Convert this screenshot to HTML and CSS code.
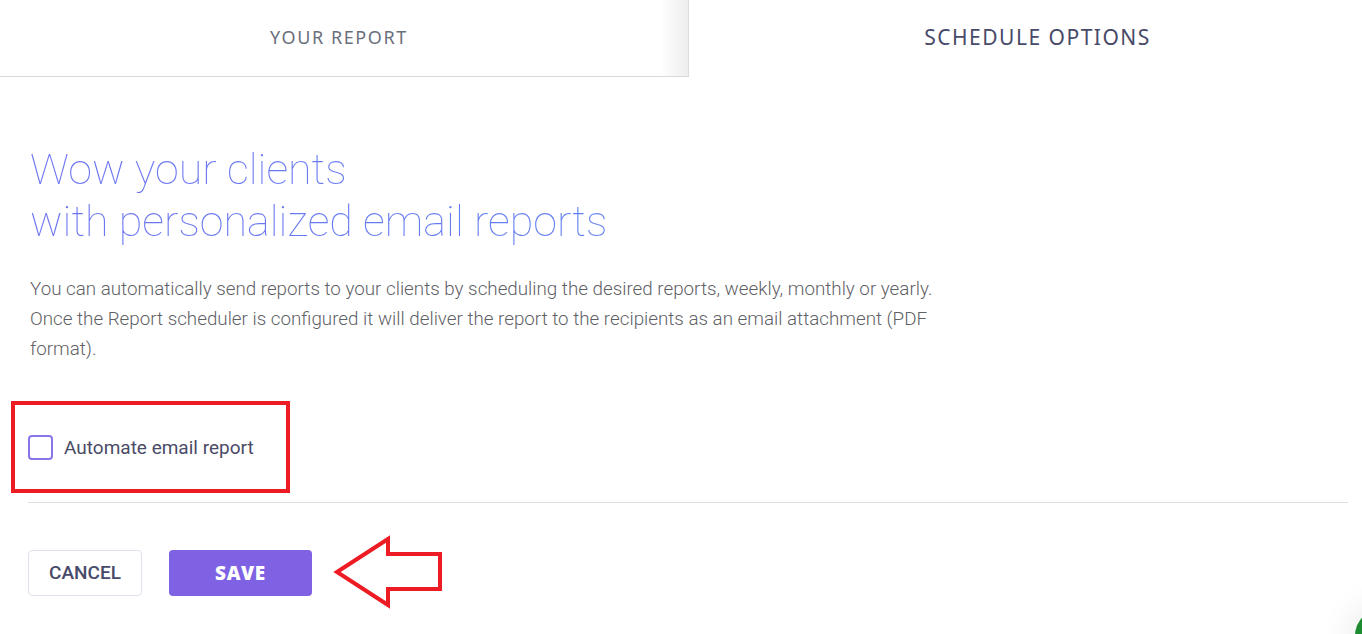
FILE: index.html
```html
<!DOCTYPE html>
<html lang="en">
<head>
  <meta charset="UTF-8">
  <meta name="viewport" content="width=device-width, initial-scale=1.0">
  <title>Schedule Options</title>
  <link rel="stylesheet" href="styles.css">
</head>
<body>

  <div class="tabs">
    <div class="tab">YOUR REPORT</div>
    <div class="tab active">SCHEDULE OPTIONS</div>
  </div>

  <div class="content">
    <h1 class="headline">Wow your clients<br>with personalized email reports</h1>

    <p class="intro">
      You can automatically send reports to your clients by scheduling the desired reports, weekly, monthly or yearly.
      Once the Report scheduler is configured it will deliver the report to the recipients as an email attachment (PDF format).
    </p>

    <div class="highlight">
      <label class="check-row">
        <input type="checkbox" name="automate">
        <span class="check-box"></span>
        <span class="check-label">Automate email report</span>
      </label>
    </div>

    <hr class="divider">

    <div class="actions">
      <button class="btn btn-cancel">CANCEL</button>
      <button class="btn btn-save">SAVE</button>
      <!-- hand drawn pointer next to the save button -->
      <svg class="pointer" width="112" height="74" viewBox="0 0 112 74">
        <path d="M4 37 L55 4 L55 19 L107 19 L107 54 L55 54 L55 70 Z" fill="none" stroke="#ed1c24" stroke-width="4" stroke-linejoin="miter"/>
      </svg>
    </div>
  </div>

  <div class="chat-bubble"></div>

</body>
</html>
```

FILE: styles.css
```css
body {
  margin: 0;
  font-family: Roboto, "Liberation Sans", sans-serif;
  background-color: #fff;
  overflow: hidden;
}

/* Tabs */
.tabs {
  display: flex;
  height: 77px;
}

.tab {
  display: flex;
  align-items: center;
  justify-content: center;
  padding-bottom: 3px;
  font-family: "Noto Sans", "Open Sans", sans-serif;
  font-size: 18px;
  letter-spacing: 1.6px;
  color: #6b6f7c;
  box-sizing: border-box;
}

.tab:first-child {
  flex: 0 0 689px;
  padding-right: 10px;
  border-bottom: 1px solid #d9d9d9;
  border-right: 1px solid #dcdcdc;
  background: linear-gradient(to right, #fff 96%, #eeeeee 100%);
}

.tab.active {
  flex: 1;
  padding-left: 24px;
  font-size: 21px;
  letter-spacing: 1.5px;
  color: #474a68;
}

/* Main area */
.content {
  padding: 0 14px 0 28px;
}

.headline {
  margin: 66px 0 0 2px;
  font-size: 43px;
  font-weight: 100;
  line-height: 52px;
  background: linear-gradient(to right, #6e74f0, #5b84f5 60%, #6079f2);
  -webkit-background-clip: text;
  background-clip: text;
  color: transparent;
}

.intro {
  margin: 27px 0 0 2px;
  max-width: 920px;
  font-size: 18.8px;
  font-weight: 300;
  line-height: 30px;
  color: #5f5f66;
}

.highlight {
  box-sizing: border-box;
  margin: 37px 0 0 -17px;
  width: 279px;
  height: 92px;
  border: 4px solid #ed1c24;
  display: flex;
  align-items: center;
  padding-left: 13px;
}

.check-row {
  display: flex;
  align-items: center;
  cursor: pointer;
}

input[type="checkbox"] {
  display: none;
}

.check-box {
  width: 21px;
  height: 21px;
  border: 2px solid #8b74e8;
  border-radius: 4px;
  margin-right: 11px;
}

.check-label {
  font-size: 19px;
  color: #4a4b66;
}

.divider {
  margin: 9px 0 0 0;
  border: none;
  border-top: 1px solid #dde0e4;
}

.actions {
  display: flex;
  align-items: center;
  margin-top: 33px;
}

.btn {
  height: 46px;
  border-radius: 4px;
  font-size: 18px;
  cursor: pointer;
}

.btn-cancel {
  width: 114px;
  background-color: #fff;
  border: 1px solid #e2e0ee;
  color: #474a68;
  font-family: Roboto, sans-serif;
  font-weight: 500;
  font-size: 19px;
}

.btn-save {
  width: 143px;
  margin-left: 27px;
  background-color: #7e62e3;
  border: none;
  color: #fff;
  font-family: "Open Sans", sans-serif;
  font-weight: 800;
  font-size: 19px;
  letter-spacing: 0.6px;
}

.pointer {
  margin-left: 21px;
  margin-top: -1px;
}

/* Support widget peeking in the corner */
.chat-bubble {
  position: fixed;
  right: -49px;
  bottom: -30px;
  width: 56px;
  height: 56px;
  border-radius: 50%;
  background-color: #1d8c30;
  box-shadow: 0 0 30px 10px rgba(0, 0, 0, 0.06);
}
```
